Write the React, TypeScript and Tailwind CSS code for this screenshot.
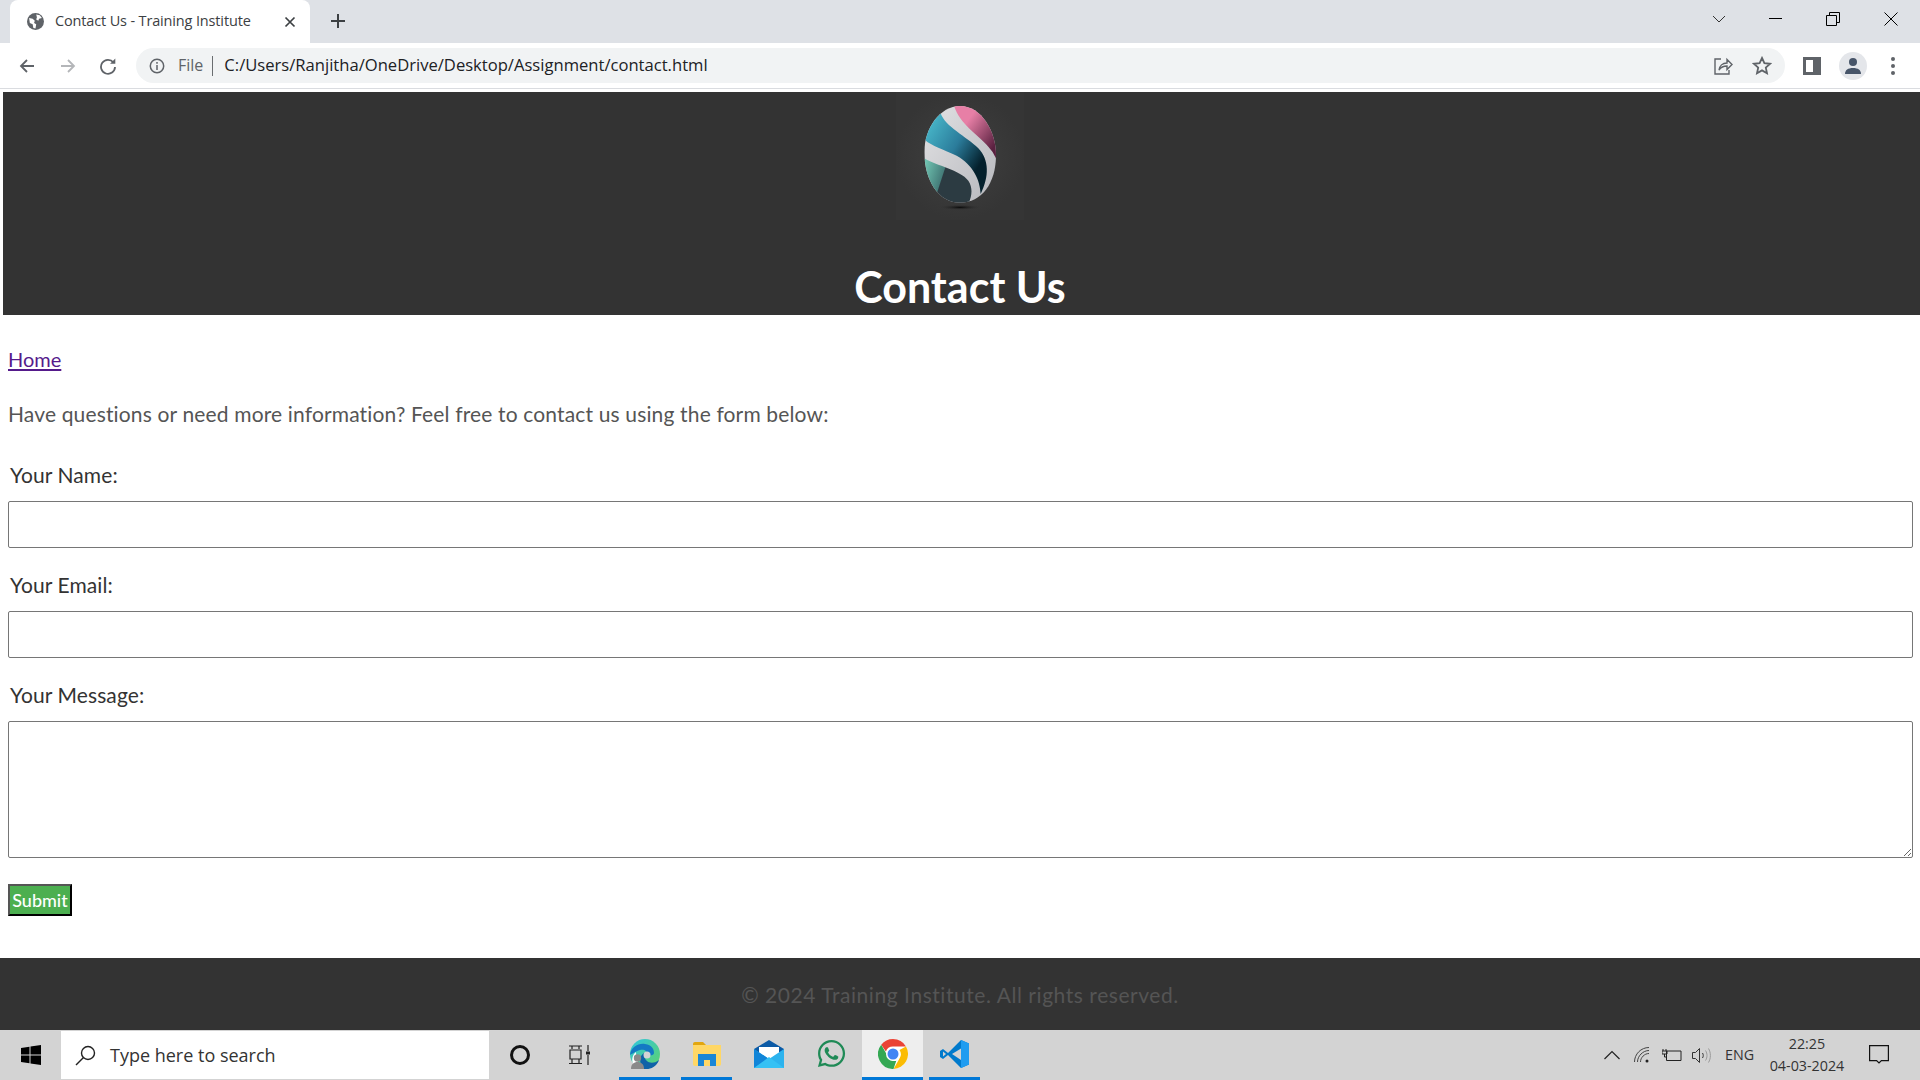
import { FaWhatsapp } from "react-icons/fa";

const COMIC = "font-['Comic_Sans_MS','Lato',sans-serif]";
const UI = "font-['Open_Sans','Noto_Sans',sans-serif]";

function Logo() {
  return (
    <svg width="128" height="128" viewBox="108 6 384 384" className="block">
      <defs>
        <clipPath id="egg">
          <path d="M300 48C365 48 408 125 408 195C408 280 365 338 300 338C235 338 193 270 193 185C193 115 240 48 300 48Z" />
        </clipPath>
        <radialGradient id="glow">
          <stop offset="0" stopColor="#404040" />
          <stop offset="1" stopColor="#353535" />
        </radialGradient>
        <radialGradient id="shade">
          <stop offset="0" stopColor="#0a0a0a" />
          <stop offset="1" stopColor="#333" stopOpacity="0" />
        </radialGradient>
        <linearGradient id="pink" x1="0" y1="0" x2="1" y2="0.9">
          <stop offset="0.3" stopColor="#e77fa6" />
          <stop offset="0.8" stopColor="#5a2140" />
        </linearGradient>
        <linearGradient id="blue" x1="0" y1="0" x2="1" y2="0.8">
          <stop offset="0" stopColor="#4ec3d3" />
          <stop offset="0.5" stopColor="#2b7c9b" />
          <stop offset="0.85" stopColor="#04202c" />
        </linearGradient>
        <linearGradient id="teal" x1="0" y1="0" x2="1" y2="0.3">
          <stop offset="0.1" stopColor="#6fc2b0" />
          <stop offset="0.48" stopColor="#457d7a" />
          <stop offset="0.5" stopColor="#2c3b42" />
        </linearGradient>
        <linearGradient id="band" x1="0" y1="0" x2="1" y2="1">
          <stop offset="0" stopColor="#e4e4e6" />
          <stop offset="1" stopColor="#b4b5ba" />
        </linearGradient>
      </defs>
      <rect x="108" y="6" width="384" height="384" fill="url(#glow)" />
      <g clipPath="url(#egg)">
        <rect x="180" y="40" width="240" height="310" fill="url(#band)" />
        <path d="M280 40C295 100 350 130 385 170Q405 190 415 225L430 40Z" fill="url(#pink)" />
        <path d="M242 70C255 110 320 140 355 175C388 210 388 260 362 312C360 270 340 225 290 197C250 178 215 168 195 150C200 120 215 95 242 70Z" fill="url(#blue)" />
        <path d="M193 205C230 228 300 240 325 272C340 295 335 320 325 342L185 342Z" fill="url(#teal)" />
      </g>
      <ellipse cx="300" cy="352" rx="62" ry="8" fill="url(#shade)" />
    </svg>
  );
}

function TabBar() {
  return (
    <div className="flex h-[43px] bg-[#dee1e6] text-black">
      <div className="ml-[10px] mt-0 flex h-[43px] w-[300px] items-center rounded-t-lg bg-white pl-[17px]">
        <svg width="17" height="17" viewBox="0 0 24 24" className="shrink-0">
          <circle cx="12" cy="12" r="12" fill="#5f6368" />
          <path d="M3 7l5 1 3 3-1 3 3 2-1 6-3-1-1-5-4-2zM13 2l5 1 3 4-4 1-1 3-3-2 1-3z" fill="#fff" />
        </svg>
        <span className={`ml-[11px] mb-[1px] text-[14.5px] tracking-[-0.15px] text-[#3c4043] ${UI}`}>Contact Us - Training Institute</span>
        <svg width="12" height="12" viewBox="0 0 12 12" className="ml-[33px]" stroke="#3c4043" strokeWidth="1.7">
          <path d="M1.5 1.5l9 9M10.5 1.5l-9 9" />
        </svg>
      </div>
      <svg width="16" height="16" viewBox="0 0 16 16" className="ml-5 mt-[13px]" stroke="#3c4043" strokeWidth="2">
        <path d="M8 1v14M1 8h14" />
      </svg>
      <div className="ml-auto flex items-start">
        <svg width="14" height="8" viewBox="0 0 14 8" className="mr-[43px] mt-[15px]" fill="none" stroke="#333" strokeWidth="1">
          <path d="M1 1l6 6 6-6" />
        </svg>
        <div className="mr-[44px] mt-[18px] h-px w-[13px] bg-black" />
        <svg width="14" height="14" viewBox="0 0 14 14" className="mr-[44px] mt-[12px]" fill="none" stroke="#000" strokeWidth="1">
          <path d="M0.5 3.5h10v10h-10zM3.5 3.5v-3h10v10h-3" />
        </svg>
        <svg width="14" height="14" viewBox="0 0 14 14" className="mr-[22px] mt-[12px]" fill="none" stroke="#000" strokeWidth="1">
          <path d="M0.5 0.5l13 13M13.5 0.5l-13 13" />
        </svg>
      </div>
    </div>
  );
}

function Toolbar() {
  return (
    <div className="flex h-[46px] items-center border-b-[1px] border-[#dadce0] bg-white">
      <svg width="18" height="18" viewBox="0 0 18 18" className="ml-[18px]" fill="none" stroke="#5f6368" strokeWidth="1.8">
        <path d="M16 9H3M9 3L3 9l6 6" />
      </svg>
      <svg width="18" height="18" viewBox="0 0 18 18" className="ml-[23px]" fill="none" stroke="#b4b6b9" strokeWidth="1.8">
        <path d="M2 9h13M9 3l6 6-6 6" />
      </svg>
      <svg width="18" height="18" viewBox="0 0 18 18" className="ml-[22px]" fill="none" stroke="#5f6368" strokeWidth="1.8">
        <path d="M14.5 5.5A7 7 0 1 0 16 10" />
        <path d="M16.3 1.6v5.2h-5.2z" fill="#5f6368" stroke="none" />
      </svg>
      <div className="ml-[19px] flex h-[35px] w-[1649px] items-center rounded-full bg-[#f1f3f4]">
        <svg width="16" height="16" viewBox="0 0 16 16" className="ml-[13px]" fill="none" stroke="#5f6368" strokeWidth="1.5">
          <circle cx="8" cy="8" r="6.7" />
          <path d="M8 7v5M8 4v1.8" />
        </svg>
        <span className={`ml-[13px] mb-[1px] text-[16px] text-[#5f6368] ${UI}`}>File</span>
        <span className="ml-[9px] h-[20px] w-px bg-[#6a6d70]" />
        <span className={`ml-[11px] text-[16.6px] text-[#202124] ${UI}`}>
          C:/Users/Ranjitha/OneDrive/Desktop/Assignment/contact.html
        </span>
        <svg width="20" height="20" viewBox="0 0 20 20" className="ml-auto" fill="none" stroke="#5f6368" strokeWidth="1.4">
          <path d="M8 3H2v15h14v-4" />
          <path d="M6 14c.5-4 3.5-7 8-7V3.5l5 5-5 5V10c-3.5 0-6 1-8 4z" />
        </svg>
        <svg width="20" height="20" viewBox="0 0 20 20" className="ml-[19px] mr-[13px]" fill="none" stroke="#5f6368" strokeWidth="1.8">
          <path d="M10 2l2.4 5.2 5.6.6-4.2 3.8 1.2 5.6L10 14.4l-5 2.8 1.2-5.6L2 7.8l5.6-.6z" />
        </svg>
      </div>
      <div className="ml-[18px] flex h-[18px] w-[18px] justify-center border-[3px] border-x-[3px] border-[#5f6368] bg-white">
        <div className="ml-auto h-full w-[5px] bg-[#5f6368]" />
      </div>
      <div className="ml-[18px] flex h-[28px] w-[28px] items-center justify-center rounded-full bg-[#e4e6ea]">
        <svg width="18" height="18" viewBox="0 0 18 18" fill="#475569">
          <circle cx="9" cy="5" r="4" />
          <path d="M1 17c0-4 3-6 8-6s8 2 8 6z" />
        </svg>
      </div>
      <div className="ml-[24px] flex flex-col gap-[3px]">
        <span className="h-[4px] w-[4px] rounded-full bg-[#5f6368]" />
        <span className="h-[4px] w-[4px] rounded-full bg-[#5f6368]" />
        <span className="h-[4px] w-[4px] rounded-full bg-[#5f6368]" />
      </div>
    </div>
  );
}

function Field({ label, tall }: { label: string; tall?: boolean }) {
  return (
    <div className={tall ? "mb-[26px]" : "mb-[24px]"}>
      <label className="mb-[13px] block pl-[2px] text-[21px] leading-[26px] tracking-[0.1px] text-[#333]">{label}</label>
      {tall ? (
        <textarea className="block h-[137px] w-[1905px] rounded-[2px] border border-[#767676] bg-white" />
      ) : (
        <input type="text" className="block h-[47px] w-[1905px] rounded-[2px] border border-[#767676] bg-white" />
      )}
    </div>
  );
}

function Edge() {
  return (
    <svg width="30" height="30" viewBox="0 0 30 30">
      <defs>
        <linearGradient id="edgeA" x1="0" y1="0" x2="1" y2="1">
          <stop offset="0" stopColor="#2fc5e0" />
          <stop offset="1" stopColor="#5fd36a" />
        </linearGradient>
      </defs>
      <circle cx="15" cy="15" r="15" fill="url(#edgeA)" />
      <path d="M0 16C1 8 8 4 15 5c7 1 9 5 9 9 0 2-3 3-7 2 1-4-3-6-7-5S0 16 0 16z" fill="#1479c4" />
      <path d="M14 30c7 1 13-3 15-9-5 4-10 3-12 1-3-3-3-5-3-8-4 2-6 10 0 16z" fill="#0f62a8" />
      <path d="M6 13c-4 3-5 9-2 13 3 3 7 4 10 4-5-3-8-10-8-17z" fill="#fff" />
      <circle cx="7.5" cy="19" r="3.7" fill="#8a8a8a" />
      <path d="M1 30c0-5 3-7 6.5-7s6.500 2 6.500 7z" fill="#8a8a8a" />
      <circle cx="17" cy="16" r="3.500" fill="#d4d4d4" />
    </svg>
  );
}

function Folder() {
  return (
    <svg width="28" height="24" viewBox="0 0 28 24">
      <path d="M0 2a2 2 0 0 1 2-2h8l3 3H0z" fill="#e2a60f" />
      <path d="M0 3h28v19a2 2 0 0 1-2 2H2a2 2 0 0 1-2-2z" fill="#ffd766" />
      <path d="M5 24v-12h18v12h-6v-6h-6v6z" fill="#1a86d6" />
    </svg>
  );
}

function Mail() {
  return (
    <svg width="30" height="28" viewBox="0 0 30 28">
      <path d="M0 9L15 0l15 9v3H0z" fill="#0b5aa6" />
      <path d="M5 7h20v13H5z" fill="#fff" />
      <path d="M0 9l15 10L30 9v19H0z" fill="#2cb3ee" />
      <path d="M0 9l15 10L0 28z" fill="#1185d8" />
      <path d="M0 28l15-11 15 11z" fill="#35c1f4" />
    </svg>
  );
}

function Chrome() {
  return (
    <svg width="30" height="30" viewBox="0 0 30 30">
      <circle cx="15" cy="15" r="15" fill="#fff" />
      <path d="M15 0a15 15 0 0 1 13 7.500H15a7.500 7.500 0 0 0-7.100 5L3.200 5.800A15 15 0 0 1 15 0z" fill="#ea4335" />
      <path d="M28 7.500A15 15 0 0 1 15.500 30l6-10.500A7.500 7.500 0 0 0 21.500 11z" fill="#fbbc04" />
      <path d="M3.200 5.800l6.300 11A7.500 7.500 0 0 0 18.300 21.800l-2.800 8.200A15 15 0 0 1 3.200 5.800z" fill="#34a853" />
      <circle cx="15" cy="15" r="7" fill="#fff" />
      <circle cx="15" cy="15" r="5.500" fill="#4285f4" />
    </svg>
  );
}

function Code() {
  return (
    <svg width="30" height="30" viewBox="0 0 30 30">
      <path d="M21 1L8 14 3 10 0 12v6l3 2 5-4 13 13 8-3.500V4.500z" fill="#007acc" />
      <path d="M21 1l8 3.500v21L21 29z" fill="#1f9cf0" />
      <path d="M21 9.500L12 15l9 6z" fill="#d3d3d3" />
      <path d="M3 12.500L6 15l-3 2.500z" fill="#d3d3d3" />
    </svg>
  );
}

function AppSlot({ children, width, active, lit }: { children: React.ReactNode; width: string; active?: boolean; lit?: boolean }) {
  return (
    <div className={`flex h-[50px] flex-col items-center ${width} ${lit ? "bg-[#eeeeee]" : ""}`}>
      <div className="flex flex-1 items-center justify-center">{children}</div>
      <div className={`h-[3px] w-full ${active ? "bg-[#0078d7]" : ""}`} />
    </div>
  );
}

function Taskbar() {
  return (
    <div className={`flex h-[50px] items-center bg-[#d3d3d3] text-black ${UI}`}>
      <div className="flex w-[61px] justify-center">
        <svg width="20" height="20" viewBox="0 0 20 20" fill="#000">
          <path d="M0 3l8.500-1.300V9.500H0zM9.500 1.500L20 0v9.500H9.500zM0 10.500h8.500v7.800L0 17zM9.500 10.500H20V20L9.500 18.500z" />
        </svg>
      </div>
      <div className="flex h-[48px] w-[428px] items-center bg-white">
        <svg width="21" height="21" viewBox="0 0 21 21" className="ml-[14px]" fill="none" stroke="#222" strokeWidth="1.400">
          <circle cx="13" cy="8" r="6.500" />
          <path d="M8.500 12.500L1 20" />
        </svg>
        <span className="ml-[14px] text-[18px] text-[#333]">Type here to search</span>
      </div>
      <div className="ml-[21px] h-[20px] w-[20px] rounded-full border-[3px] border-[#111]" />
      <svg width="21" height="20" viewBox="0 0 21 20" className="ml-[39px]" fill="none" stroke="#222" strokeWidth="1.200">
        <path d="M0 1h13M3 1v3M10 1v3M1 5h11v9H1zM0 18.500h13M3 14v4M10 14v4M19 0v6M19 10v10" />
        <rect x="17" y="6.500" width="4" height="3" fill="#222" stroke="none" />
      </svg>
      <div className="ml-[29px] flex items-center">
        <AppSlot width="w-[51px]" active><Edge /></AppSlot>
        <div className="w-[11px]" />
        <AppSlot width="w-[51px]" active><Folder /></AppSlot>
        <div className="w-[6px]" />
        <AppSlot width="w-[62px]"><Mail /></AppSlot>
        <AppSlot width="w-[62px]"><FaWhatsapp size={31} color="#1f8a56" /></AppSlot>
        <AppSlot width="w-[61px]" active lit><Chrome /></AppSlot>
        <div className="w-[6px]" />
        <AppSlot width="w-[51px]" active><Code /></AppSlot>
      </div>
      <div className="ml-auto flex items-center">
        <svg width="16" height="10" viewBox="0 0 16 10" fill="none" stroke="#222" strokeWidth="1.200">
          <path d="M0.500 9L8 1.500 15.500 9" />
        </svg>
        <svg width="16" height="16" viewBox="0 0 16 16" className="ml-[14px]" fill="none" stroke="#444" strokeWidth="1">
          <path d="M0.500 15C0.500 7 7 0.500 15 0.500M3.500 15C3.500 9 9 3.500 15 3.500M6.500 15C6.500 10.500 10.500 6.500 15 6.500" />
          <circle cx="13" cy="14" r="1.500" fill="#222" stroke="none" />
        </svg>
        <svg width="20" height="12" viewBox="0 0 20 12" className="ml-[12px]" fill="none" stroke="#222" strokeWidth="1">
          <path d="M4.500 2h14.500v9.500H4.500zM1 2V0M4 2V0M0 2h5v3H0zM2.500 5v3h2" />
        </svg>
        <svg width="20" height="15" viewBox="0 0 20 15" className="ml-[10px]" fill="none" stroke="#333" strokeWidth="1">
          <path d="M0.500 4.500h3l4-4v14l-4-4h-3z" />
          <path d="M10.500 5c1 1.500 1 3.500 0 5" />
          <path d="M13.500 2.500c2 3 2 7 0 10M16.500 0.500c2.500 4 2.500 10 0 14" stroke="#999" />
        </svg>
        <span className="ml-[13px] w-[34px] text-[14.3px] text-[#333]">ENG</span>
        <div className="ml-[2px] flex w-[92px] flex-col items-center text-[14.3px] leading-[22px] text-[#333]">
          <span>22:25</span>
          <span>04-03-2024</span>
        </div>
        <svg width="20" height="20" viewBox="0 0 20 20" className="ml-[16px] mr-[31px]" fill="none" stroke="#111" strokeWidth="1.200">
          <path d="M0.600 0.600h18.800v15h-7l-2.400 2.400-2.400-2.400h-7z" />
        </svg>
      </div>
    </div>
  );
}

export default function App() {
  return (
    <div className="flex h-screen w-full flex-col overflow-hidden bg-white">
      <TabBar />
      <Toolbar />
      <div className="h-[3px] bg-white" />
      <div className="flex-1 overflow-hidden">
        <div className={COMIC}>
          <header className="ml-[3px] flex h-[223px] flex-col items-center bg-[#333] pr-[3px]">
            <Logo />
            <h1 className="mt-[42px] text-[43px] leading-[50px] font-bold text-white">Contact Us</h1>
          </header>
          <main className="px-[8px]">
            <a href="#" className="mt-[31px] block w-fit text-[20px] leading-[26px] text-[#551a8b] underline decoration-2 underline-offset-2">Home</a>
            <p className="mt-[29px] text-[21px] leading-[26px] tracking-[0.15px] text-[#555]">
              Have questions or need more information? Feel free to contact us using the form below:
            </p>
            <form className="mt-[35px]">
              <Field label="Your Name:" />
              <Field label="Your Email:" />
              <Field label="Your Message:" tall />
              <button type="button" className="block h-[32px] w-[64px] border-2 border-t-[#555] border-r-black border-b-black border-l-[#555] bg-[#4caf50] text-[18px] leading-[24px] font-medium text-white">
                Submit
              </button>
            </form>
          </main>
          <footer className="mt-[42px] flex h-[72px] items-center justify-center bg-[#333] pt-[2px] text-[21px] tracking-[0.55px] text-[#555]">
            © 2024 Training Institute. All rights reserved.
          </footer>
        </div>
      </div>
      <Taskbar />
    </div>
  );
}
